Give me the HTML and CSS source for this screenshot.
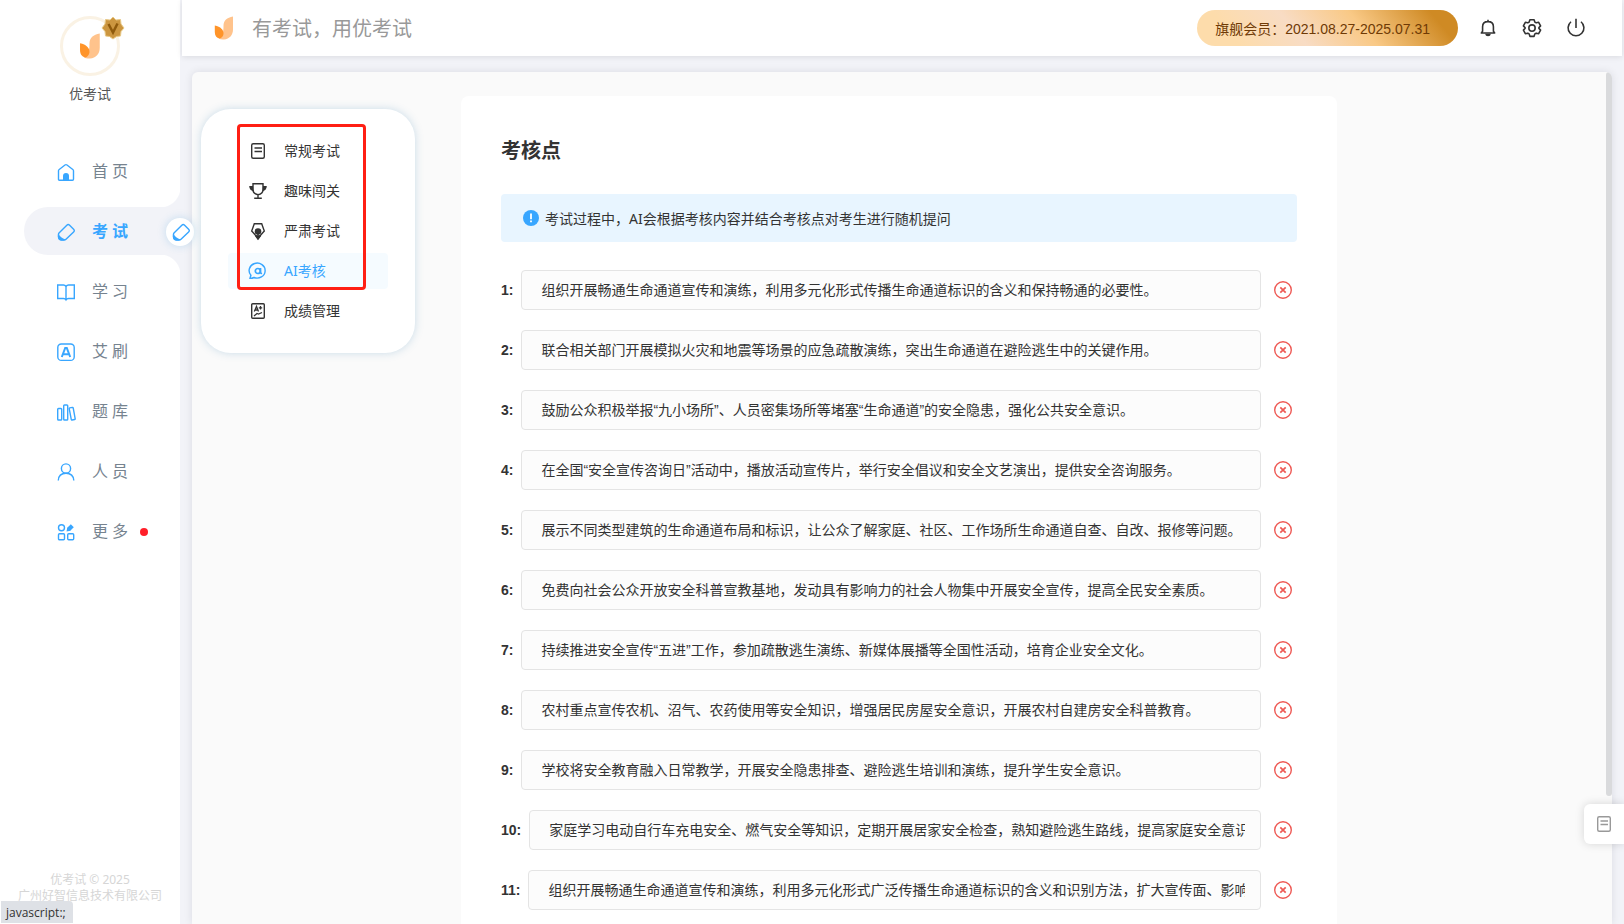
FILE: index.html
```html
<!DOCTYPE html>
<html lang="zh-CN">
<head>
<meta charset="utf-8">
<title>优考试</title>
<link rel="stylesheet" href="styles.css">
</head>
<body>
<svg class="sprite" aria-hidden="true">
  <symbol id="i-flame" viewBox="0 0 20 24">
    <path d="M19 0.500C13 1.500 9.500 4.500 9.500 10C9.500 15 9 20 4.500 22.500C6 23.300 8 23.700 10 23.500C15.500 23 19 19 19 13.500Z" fill="#ffc38c"/>
    <path d="M0.800 9.500C6.500 10.500 10 14 9.500 18C9.200 20.500 7.500 22.300 5.500 22.500C2.500 22 0.800 19.500 0.800 16Z" fill="#ff9429"/>
  </symbol>
  <symbol id="i-eraser" viewBox="0 0 20 20">
    <path d="M3 11L10.800 3.200Q12.200 1.800 13.600 3.200L17.600 7.200Q19 8.600 17.600 10L10 17.300Q9.300 18 8 18H5.500Q2.800 17.800 2.500 15V12.500Q2.500 11.500 3 11Z" fill="none" stroke="currentColor" stroke-width="1.400"/>
    <path d="M2.500 12Q4.500 15.800 9.500 17.500L8 18.600H5Q2 18 1.900 15V12.500Z" fill="currentColor"/>
  </symbol>
  <symbol id="i-doc" viewBox="0 0 20 20">
    <rect x="3.700" y="2.700" width="12.600" height="14.600" rx="1.500" fill="none" stroke="currentColor" stroke-width="1.400"/>
    <path d="M6.500 7H14M6.500 10.500H14" stroke="currentColor" stroke-width="1.400"/>
  </symbol>
  <symbol id="i-del" viewBox="0 0 20 20">
    <circle cx="10" cy="10" r="8.300" fill="none" stroke="currentColor" stroke-width="1.400"/>
    <path d="M7.300 7.300L12.700 12.700M12.700 7.300L7.300 12.700" stroke="currentColor" stroke-width="1.700"/>
  </symbol>
</svg>

<div class="app">
  <aside class="sidebar">
    <div class="profile">
      <div class="avatar">
        <svg class="avatar-logo"><use href="#i-flame"/></svg>
        <svg class="badge" viewBox="0 0 24 24"><path d="M12 1L15 4L19.500 3.500L20 8L23 12L20 15.500L19.500 20L15.500 20.500L12 23L8.500 20.500L4.500 20L4 15.500L1 12L4 8L4.500 3.500L9 4Z" fill="#cc9640" stroke="#e8c988" stroke-width="1"/><path d="M7.500 8L12 16.500L16.500 7.500" fill="none" stroke="#8f5a0c" stroke-width="2.500"/></svg>
      </div>
      <div class="profile-name">优考试</div>
    </div>
    <nav class="nav">
      <a class="nav-item" href="#"><svg class="icon" viewBox="0 0 20 20"><path d="M5 18.300H3.500Q2.500 18.300 2.500 17.300V8.800Q2.500 8 3.200 7.500L9 3Q10 2.300 11 3L16.800 7.500Q17.500 8 17.500 8.800V17.300Q17.500 18.300 16.500 18.300H5" fill="none" stroke="currentColor" stroke-width="1.400"/><path d="M7 18V14A3 3 0 0 1 13 14V18Z" fill="currentColor"/></svg><span>首页</span></a>
      <a class="nav-item active" href="#"><svg class="icon"><use href="#i-eraser"/></svg><span>考试</span></a>
      <a class="nav-item" href="#"><svg class="icon" viewBox="0 0 20 20"><path d="M10 4.500Q9 3 7.500 3H1.700V16.500H7.500Q9.300 16.500 10 17.800Q10.700 16.500 12.500 16.500H18.300V3H12.500Q11 3 10 4.500V17.500" fill="none" stroke="currentColor" stroke-width="1.400"/></svg><span>学习</span></a>
      <a class="nav-item" href="#"><svg class="icon" viewBox="0 0 20 20"><rect x="1.800" y="2" width="16.400" height="16.400" rx="3.500" fill="none" stroke="currentColor" stroke-width="1.400"/><path d="M5.800 15L9.200 6H10.800L14.200 15M7.200 12.300H13" fill="none" stroke="currentColor" stroke-width="2"/></svg><span>艾刷</span></a>
      <a class="nav-item" href="#"><svg class="icon" viewBox="0 0 20 20"><g fill="none" stroke="currentColor" stroke-width="1.400"><rect x="1.700" y="6.500" width="4" height="11.500" rx=".8"/><rect x="7.700" y="3" width="4" height="15" rx=".8"/><path d="M13.700 5.900L16.500 5.400Q17 5.300 17.200 5.900L19.200 16.800Q19.300 17.400 18.700 17.500L16 18Q15.400 18.100 15.300 17.500L13.200 6.600Q13.100 6 13.700 5.900Z"/></g></svg><span>题库</span></a>
      <a class="nav-item" href="#"><svg class="icon" viewBox="0 0 20 20"><g fill="none" stroke="currentColor" stroke-width="1.400"><circle cx="10" cy="6.500" r="4.600"/><path d="M2.300 18.500C2.500 14 5.500 11.300 10 11.300S17.500 14 17.800 18.500"/></g></svg><span>人员</span></a>
      <a class="nav-item" href="#"><svg class="icon" viewBox="0 0 20 20"><g fill="none" stroke="currentColor" stroke-width="1.400"><circle cx="5.500" cy="5.800" r="3"/><rect x="2.500" y="11.700" width="6" height="6" rx="1"/><rect x="11.700" y="11.700" width="6" height="6" rx="1"/></g><path d="M12.500 7.500L16.300 3.700" stroke="currentColor" stroke-width="4.200"/><path d="M10.500 9.400L11.300 5.500L14.500 8.700Z" fill="currentColor"/></svg><span>更多</span><i class="dot"></i></a>
    </nav>
    <footer class="copyright">优考试 © 2025<br>广州好智信息技术有限公司</footer>
  </aside>

  <div class="main">
    <header class="topbar">
      <svg class="top-logo"><use href="#i-flame"/></svg>
      <div class="slogan">有考试，用优考试</div>
      <div class="member">旗舰会员：2021.08.27-2025.07.31</div>
      <button class="top-btn" type="button" aria-label="通知"><svg viewBox="0 0 24 24"><path d="M4 18H20L18.500 16V10.500C18.500 6.500 16 4.300 12 4.300S5.500 6.500 5.500 10.500V16ZM12 4.300V2" fill="none" stroke="currentColor" stroke-width="1.900" stroke-linejoin="round"/><path d="M8.500 19H15.500Q15 22 12 22T8.500 19Z" fill="currentColor"/></svg></button>
      <button class="top-btn" type="button" aria-label="设置"><svg viewBox="0 0 24 24"><g fill="none" stroke="currentColor" stroke-width="1.900" stroke-linejoin="round"><circle cx="12" cy="12" r="3.800"/><path d="M9.500 2H14.500L15.500 5L17 5.800L20 5.200L22.300 9.500L20.300 11.500V12.500L22.300 14.500L20 18.800L17 18.200L15.500 19L14.500 22H9.500L8.500 19L7 18.200L4 18.800L1.700 14.500L3.700 12.500V11.500L1.700 9.500L4 5.200L7 5.800L8.500 5Z"/></g></svg></button>
      <button class="top-btn" type="button" aria-label="退出"><svg viewBox="0 0 24 24"><path d="M12 1V12M6 4.500A9.500 9.500 0 1 0 18 4.500" fill="none" stroke="currentColor" stroke-width="1.900"/></svg></button>
    </header>

    <div class="panel">
      <main class="card">
        <h1>考核点</h1>
        <div class="tip"><svg viewBox="0 0 16 16"><circle cx="8" cy="8" r="8" fill="#38a6ff"/><path d="M8 3.500V9.200M8 10.500V12.300" stroke="#fff" stroke-width="1.800"/></svg><span>考试过程中，AI会根据考核内容并结合考核点对考生进行随机提问</span></div>
        <div class="rows">
          <div class="row"><label for="p1">1:</label><input id="p1" type="text" value="组织开展畅通生命通道宣传和演练，利用多元化形式传播生命通道标识的含义和保持畅通的必要性。"><button type="button" aria-label="删除"><svg><use href="#i-del"/></svg></button></div>
          <div class="row"><label for="p2">2:</label><input id="p2" type="text" value="联合相关部门开展模拟火灾和地震等场景的应急疏散演练，突出生命通道在避险逃生中的关键作用。"><button type="button" aria-label="删除"><svg><use href="#i-del"/></svg></button></div>
          <div class="row"><label for="p3">3:</label><input id="p3" type="text" value="鼓励公众积极举报“九小场所”、人员密集场所等堵塞“生命通道”的安全隐患，强化公共安全意识。"><button type="button" aria-label="删除"><svg><use href="#i-del"/></svg></button></div>
          <div class="row"><label for="p4">4:</label><input id="p4" type="text" value="在全国“安全宣传咨询日”活动中，播放活动宣传片，举行安全倡议和安全文艺演出，提供安全咨询服务。"><button type="button" aria-label="删除"><svg><use href="#i-del"/></svg></button></div>
          <div class="row"><label for="p5">5:</label><input id="p5" type="text" value="展示不同类型建筑的生命通道布局和标识，让公众了解家庭、社区、工作场所生命通道自查、自改、报修等问题。"><button type="button" aria-label="删除"><svg><use href="#i-del"/></svg></button></div>
          <div class="row"><label for="p6">6:</label><input id="p6" type="text" value="免费向社会公众开放安全科普宣教基地，发动具有影响力的社会人物集中开展安全宣传，提高全民安全素质。"><button type="button" aria-label="删除"><svg><use href="#i-del"/></svg></button></div>
          <div class="row"><label for="p7">7:</label><input id="p7" type="text" value="持续推进安全宣传“五进”工作，参加疏散逃生演练、新媒体展播等全国性活动，培育企业安全文化。"><button type="button" aria-label="删除"><svg><use href="#i-del"/></svg></button></div>
          <div class="row"><label for="p8">8:</label><input id="p8" type="text" value="农村重点宣传农机、沼气、农药使用等安全知识，增强居民房屋安全意识，开展农村自建房安全科普教育。"><button type="button" aria-label="删除"><svg><use href="#i-del"/></svg></button></div>
          <div class="row"><label for="p9">9:</label><input id="p9" type="text" value="学校将安全教育融入日常教学，开展安全隐患排查、避险逃生培训和演练，提升学生安全意识。"><button type="button" aria-label="删除"><svg><use href="#i-del"/></svg></button></div>
          <div class="row"><label for="p10">10:</label><input id="p10" type="text" value="家庭学习电动自行车充电安全、燃气安全等知识，定期开展居家安全检查，熟知避险逃生路线，提高家庭安全意识。"><button type="button" aria-label="删除"><svg><use href="#i-del"/></svg></button></div>
          <div class="row"><label for="p11">11:</label><input id="p11" type="text" value="组织开展畅通生命通道宣传和演练，利用多元化形式广泛传播生命通道标识的含义和识别方法，扩大宣传面、影响力。"><button type="button" aria-label="删除"><svg><use href="#i-del"/></svg></button></div>
        </div>
      </main>
      <div class="scroll-thumb"></div>
    </div>
  </div>
</div>

<div class="knob"><svg class="icon"><use href="#i-eraser"/></svg></div>

<nav class="submenu">
  <a href="#"><svg><use href="#i-doc"/></svg><span>常规考试</span></a>
  <a href="#"><svg viewBox="0 0 20 20"><path d="M5 2.700H15V8.500Q15 13 10 13.700Q5 13 5 8.500ZM10 13.700V17.200M6.200 17.300H13.800" fill="none" stroke="currentColor" stroke-width="1.400"/><path d="M5 5H1.200Q1.200 9 5.500 10.500ZM15 5H18.800Q18.800 9 14.500 10.500Z" fill="currentColor"/></svg><span>趣味闯关</span></a>
  <a href="#"><svg viewBox="0 0 20 20"><path d="M6.300 2.700H13.700L16.300 10Q13 13.500 10 17.500Q7 13.500 3.700 10Z" fill="none" stroke="currentColor" stroke-width="1.400"/><circle cx="10" cy="10.500" r="3.300" fill="currentColor"/><path d="M10 11V18M7.500 14.500L10 18L12.500 14.500" stroke="currentColor" stroke-width="1.500"/></svg><span>严肃考试</span></a>
  <a class="current" href="#"><svg viewBox="0 0 20 20"><g fill="none" stroke="currentColor"><path d="M2 17.300L2.900 14.300A8 7.500 0 1 1 6 16.500Q4 17.500 2 17.300Z" stroke-width="1.400"/><circle cx="9.800" cy="10" r="2.500" stroke-width="1.700"/><path d="M12.500 7V11.500Q12.800 12.700 14 12.300" stroke-width="1.700"/></g></svg><span>AI考核</span></a>
  <a href="#"><svg viewBox="0 0 20 20"><g fill="none" stroke="currentColor"><rect x="3.700" y="2.700" width="12.600" height="14.600" rx="1" stroke-width="1.400"/><path d="M6.300 10.500L8.500 5.500L10.500 10.500M7 9H10M12.500 5V8.500M10.800 6.800H14.200" stroke-width="1.300"/><path d="M6 15L9 12.500L10.500 13L14 11.500" stroke-width="1.300"/></g></svg><span>成绩管理</span></a>
</nav>
<div class="marker"></div>

<button class="float-btn" type="button" aria-label="记录"><svg><use href="#i-doc"/></svg></button>
<div class="status">javascript:;</div>
</body>
</html>
```

FILE: styles.css
```css
* { box-sizing: border-box; }

body {
  margin: 0;
  height: 100vh;
  overflow: hidden;
  background: #f2f3f8;
  color: #333;
  font: 14px/20px "Liberation Sans", "Noto Sans CJK SC", sans-serif;
}

a { color: inherit; text-decoration: none; }
button { border: 0; padding: 0; background: none; cursor: pointer; }
svg { display: block; }
.sprite { position: absolute; width: 0; height: 0; }

.app { display: flex; height: 100vh; }

/* sidebar */
.sidebar {
  flex: 0 0 180px;
  display: flex;
  flex-direction: column;
  background: #fff;
}
.profile {
  display: flex;
  flex-direction: column;
  align-items: center;
  gap: 8px;
  padding-top: 16px;
  height: 147px;
}
.avatar {
  position: relative;
  display: grid;
  place-items: center;
  width: 60px;
  height: 60px;
  border: 3px solid #faf2e4;
  border-radius: 50%;
}
.avatar-logo { width: 22px; height: 26px; }
.badge { position: absolute; top: -3px; right: -8px; width: 24px; height: 24px; }
.profile-name { color: #555; }

.nav { display: flex; flex-direction: column; gap: 12px; }
.nav-item {
  position: relative;
  display: flex;
  align-items: center;
  height: 48px;
  margin-left: 24px;
  padding: 2px 0 0 32px;
  border-radius: 24px 0 0 24px;
  color: #38a6ff;
}
.nav-item span {
  margin-left: 16px;
  color: #76838f;
  font-size: 16px;
  letter-spacing: 4px;
}
.icon { width: 20px; height: 20px; }
.nav-item.active { background: #f2f3f8; }
.nav-item.active span { color: #38a6ff; font-weight: bold; }
.nav-item.active::before,
.nav-item.active::after {
  content: "";
  position: absolute;
  right: 0;
  width: 20px;
  height: 20px;
}
.nav-item.active::before {
  bottom: 100%;
  background: radial-gradient(circle at 0 0, #fff 20px, #f2f3f8 21px);
}
.nav-item.active::after {
  top: 100%;
  background: radial-gradient(circle at 0 100%, #fff 20px, #f2f3f8 21px);
}
.dot { width: 8px; height: 8px; margin-left: 8px; border-radius: 50%; background: #ff1f29; }
.copyright {
  margin-top: auto;
  padding-bottom: 20px;
  color: #d6d6d6;
  font: 12px/16px "Noto Sans", "Noto Sans CJK SC", sans-serif;
  text-align: center;
}

/* top bar */
.main { flex: 1; min-width: 0; display: flex; flex-direction: column; gap: 16px; padding: 0 2px; }
.topbar {
  display: flex;
  align-items: center;
  height: 56px;
  padding: 0 36px 0 32px;
  background: #fff;
  box-shadow: 0 1px 6px rgba(0, 0, 0, .1);
}
.top-logo { width: 20px; height: 24px; }
.slogan { margin-left: 18px; padding-top: 2px; color: #999; font-size: 20px; line-height: 28px; }
.member {
  margin: 0 20px 0 auto;
  height: 36px;
  padding: 0 28px 0 18px;
  border-radius: 18px;
  background: linear-gradient(50deg, #fddcab 15%, #f8dcc4 38%, #f9c986 62%, #cf8a24 90%);
  color: #6f3a05;
  line-height: 38px;
}
.top-btn {
  display: grid;
  place-items: center;
  width: 20px;
  height: 20px;
  color: #333;
}
.top-btn + .top-btn { margin-left: 24px; }
.top-btn svg { width: 20px; height: 20px; }

/* content */
.panel {
  position: relative;
  flex: 1;
  min-height: 0;
  margin: 0 10px;
  padding: 24px 6px 0 0;
  overflow: hidden;
  border-radius: 6px 6px 0 0;
  background: #fafafa;
  box-shadow: 0 0 8px rgba(0, 0, 40, .1);
}
.scroll-thumb {
  position: absolute;
  top: 0;
  right: 0;
  width: 6px;
  height: 85%;
  border-radius: 3px;
  background: #d9dadc;
}
.card {
  max-width: 876px;
  margin: 0 auto;
  padding: 40px;
  border-radius: 8px;
  background: #fff;
}
.card h1 { margin: 0 0 28px; font-size: 20px; line-height: 30px; }
.tip {
  display: flex;
  align-items: center;
  gap: 6px;
  height: 48px;
  padding-left: 22px;
  border-radius: 4px;
  background: #e8f5ff;
  font-family: "Noto Sans", "Noto Sans CJK SC", sans-serif;
}
.tip svg { width: 16px; height: 16px; }
.tip span { padding-top: 2px; }
.rows { display: flex; flex-direction: column; gap: 20px; margin-top: 28px; }
.row { display: flex; align-items: center; padding-right: 4px; }
.row label { margin-right: 8px; font-weight: bold; }
.row input {
  flex: 1;
  min-width: 0;
  height: 40px;
  padding: 0 15px 2px 19px;
  border: 1px solid #e4e4e4;
  border-radius: 4px;
  background: #fcfcfc;
  color: #333;
  font: inherit;
}
.row button { margin-left: 12px; color: #ee5a55; }
.row button svg { width: 20px; height: 20px; }

/* overlays */
.knob {
  position: absolute;
  top: 218px;
  left: 166px;
  display: grid;
  place-items: center;
  width: 28px;
  height: 28px;
  padding-left: 2px;
  border-radius: 50%;
  background: #fff;
  box-shadow: 0 0 8px rgba(56, 150, 220, .25);
  color: #38a6ff;
}
.submenu {
  position: absolute;
  top: 109px;
  left: 201px;
  display: flex;
  flex-direction: column;
  gap: 4px;
  width: 214px;
  padding: 24px 27px;
  border-radius: 30px;
  background: #fff;
  box-shadow: 0 0 8px rgba(60, 130, 180, .25);
  font-family: "Noto Sans", "Noto Sans CJK SC", sans-serif;
}
.submenu a {
  display: flex;
  align-items: center;
  gap: 16px;
  height: 36px;
  padding-left: 20px;
  border-radius: 4px;
}
.submenu svg { width: 20px; height: 20px; }
.submenu .current { background: #f5fbff; color: #38a6ff; }
.marker {
  position: absolute;
  top: 124px;
  left: 237px;
  width: 129px;
  height: 166px;
  border: 3px solid #ff1f14;
  border-radius: 4px;
  pointer-events: none;
}
.float-btn {
  position: absolute;
  right: 0;
  bottom: 80px;
  display: grid;
  place-items: center;
  width: 40px;
  height: 40px;
  border-radius: 6px 0 0 6px;
  background: #fff;
  box-shadow: 0 0 10px rgba(0, 0, 0, .15);
  color: #999;
}
.float-btn svg { width: 20px; height: 20px; }
.status {
  position: absolute;
  left: 1px;
  bottom: 1px;
  padding: 3px 7px 1px 5px;
  border-radius: 0 4px 0 0;
  background: #dee1e6;
  font: 12px/18px "Open Sans", sans-serif;
}
```
